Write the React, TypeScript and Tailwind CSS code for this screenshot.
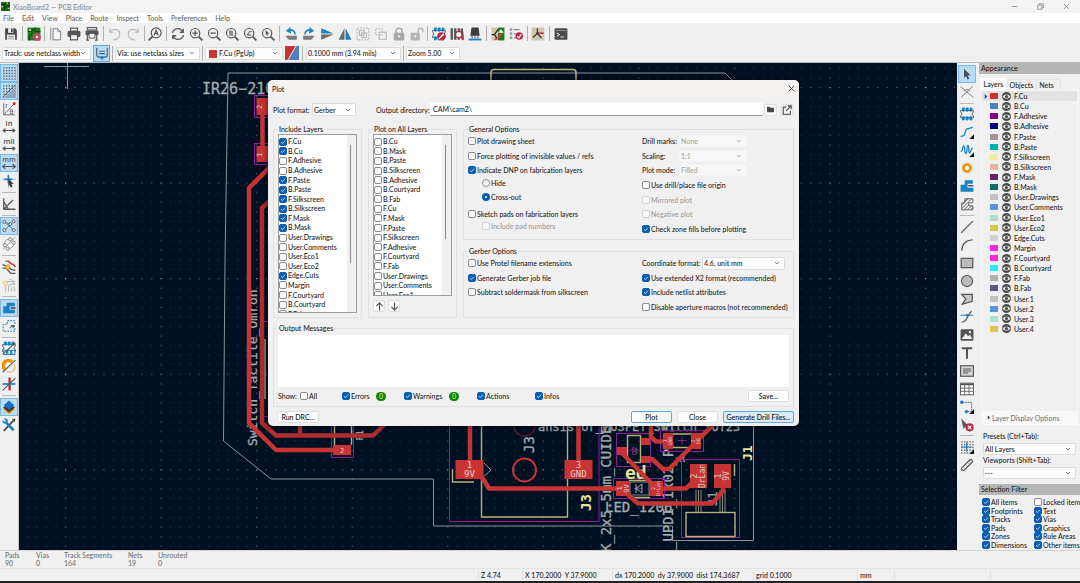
import React, { useState } from "react";

type Glyph = React.ReactNode;

const BLUE = "#1a81c4";
const INK = "#545454";
const RED = "#bf2641";

const grayLine = { stroke: INK, strokeWidth: 2, fill: "none" };
const blueLine = { stroke: BLUE, strokeWidth: 2.2, fill: "none" };
const paleLine = { stroke: "#b9b9b9", strokeWidth: 2, fill: "none" };

const magnifier = (
  <>
    <circle cx="10.5" cy="10.5" r="8" {...grayLine} />
    <path d="M16.5 16.5 L23 23" stroke={INK} strokeWidth="3" />
  </>
);

const dots = (n: number, color: string) =>
  Array.from({ length: n * n }, (_, i) => (
    <rect key={i} x={2 + (i % n) * (19 / (n - 1))} y={2 + Math.floor(i / n) * (19 / (n - 1))} width="2.4" height="2.4" fill={color} />
  ));

const chip = (
  <>
    <path d="M1 6 H23 V9 C20 9 20 15 23 15 V18 H1 V15 C4 15 4 9 1 9 Z" fill="#f4f4f4" stroke={INK} strokeWidth="1.5" />
    {[3, 9.5, 16].map((x) => (
      <g key={x} fill={BLUE}>
        <rect x={x} y="1" width="5.5" height="7" rx="2.5" />
        <rect x={x} y="16" width="5.5" height="7" rx="2.5" />
      </g>
    ))}
  </>
);

const corner = <path d="M24 16 V24 H16 Z" fill="#111" />;

const glyphs: Record<string, Glyph> = {
  Save: (
    <>
      <path d="M2 2 H19 L22 5 V22 H2 Z" fill="#484848" />
      <rect x="7" y="2" width="9" height="8" fill="#ededed" />
      <rect x="12" y="3" width="3" height="6" fill="#484848" />
      <rect x="5" y="13" width="14" height="9" fill="#ededed" />
      <path d="M7 16 H17 M7 19 H17" stroke="#777" strokeWidth="1.2" />
    </>
  ),
  "Board setup": (
    <>
      <rect x="1" y="1" width="22" height="22" fill="#1d7a1d" />
      <path d="M1 7 H8 L12 3 M4 23 V15 L9 11 M14 1 V8 H23" stroke="#0d4b10" strokeWidth="2" fill="none" />
      <circle cx="5" cy="5" r="2" fill="#d9c38a" />
      <circle cx="17" cy="17" r="4" fill="none" stroke="#d2486a" strokeWidth="3.5" />
      <circle cx="17" cy="17" r="6.5" fill="none" stroke="#d2486a" strokeWidth="2" strokeDasharray="3 2.5" />
      <circle cx="17" cy="17" r="2" fill="#fff" />
    </>
  ),
  "Page settings": (
    <>
      <path d="M7 3 H15 L20 8 V22 H7 Z" stroke="#777" strokeWidth="1.6" fill="#f7f7f7" />
      <path d="M15 3 V8 H20 M3 1 V23" stroke="#777" strokeWidth="1.4" fill="none" />
    </>
  ),
  Print: (
    <>
      <rect x="6" y="2" width="12" height="5" fill="none" stroke={INK} strokeWidth="2" />
      <rect x="1" y="7" width="22" height="10" rx="2" fill={INK} />
      <rect x="6" y="13" width="12" height="9" fill="#f0f0f0" stroke={INK} strokeWidth="2" />
    </>
  ),
  Plot: (
    <>
      <rect x="4" y="1" width="16" height="4" fill="none" stroke={INK} strokeWidth="1.8" />
      <rect x="1" y="6" width="22" height="8" rx="1" fill={INK} />
      <path d="M4 14 V23 M20 14 V23 M2 22.5 H7 M17 22.5 H22" stroke={INK} strokeWidth="2" />
      <rect x="7" y="11" width="10" height="8" fill="#f0f0f0" stroke={INK} strokeWidth="1.5" />
    </>
  ),
  Undo: <path d="M3 2 V9 H10 M3.5 8.5 C9 1 21 4 20 13 C19 19 14 22 9 22" {...paleLine} />,
  Redo: <path d="M21 2 V9 H14 M20.5 8.5 C15 1 3 4 4 13 C5 19 10 22 15 22" {...paleLine} />,
  Find: (
    <>
      <circle cx="14" cy="10" r="8.5" {...grayLine} />
      <path d="M8 16 L1 23" stroke={INK} strokeWidth="3" />
      <path d="M10.5 14 L14 5.5 L17.5 14 M11.8 11.3 H16.2" stroke={INK} strokeWidth="2" fill="none" />
    </>
  ),
  Refresh: (
    <path d="M21 3 V9 H15 M20.5 9 C17 0 5 1 2.5 10 M3 21 V15 H9 M3.5 15 C7 24 19 23 21.5 14" stroke={INK} strokeWidth="2.2" fill="none" />
  ),
  "Zoom in": (
    <>
      {magnifier}
      <path d="M6 10.5 H15 M10.5 6 V15" stroke={INK} strokeWidth="2.2" />
    </>
  ),
  "Zoom out": (
    <>
      {magnifier}
      <path d="M6 10.5 H15" stroke={INK} strokeWidth="2.2" />
    </>
  ),
  "Zoom to fit": (
    <>
      {magnifier}
      <path d="M7 6 H12 L14 8 V15 H7 Z" fill="#8a8a8a" />
    </>
  ),
  "Zoom to objects": (
    <>
      {magnifier}
      <path d="M6 12 H9 L11 8 H15 M7 14 H14" stroke="#777" strokeWidth="2" fill="none" />
    </>
  ),
  "Zoom to selection": (
    <>
      {magnifier}
      <path d="M8 5 L14 11 L11 11.5 L12 15 L10 15 L9.3 12 L8 13 Z" fill={INK} />
    </>
  ),
  "Rotate left": (
    <>
      <path d="M2 15 H22 V22 L2 15 Z M2 15 L22 22 H8 Z" fill="#7a7a7a" />
      <path d="M10 6 C15 4 19 7 19 13" {...blueLine} strokeWidth={2.6} />
      <path d="M11 0 L3 7 L12 11 Z" fill={BLUE} />
    </>
  ),
  "Rotate right": (
    <>
      <path d="M22 15 H2 V22 Z M22 15 L2 22 H16 Z" fill="#7a7a7a" />
      <path d="M14 6 C9 4 5 7 5 13" {...blueLine} strokeWidth={2.6} />
      <path d="M13 0 L21 7 L12 11 Z" fill={BLUE} />
    </>
  ),
  "Flip vertical": (
    <>
      <path d="M2 2 L23 11 H2 Z" fill={BLUE} />
      <path d="M2 22 L23 13 H2 Z" fill="#6a6a6a" />
    </>
  ),
  "Flip horizontal": (
    <>
      <path d="M11 2 L1 22 H11 Z" fill="#6a6a6a" />
      <path d="M13 2 L23 22 H13 Z" fill={BLUE} />
    </>
  ),
  Group: (
    <>
      <rect x="2" y="2" width="20" height="20" {...paleLine} strokeDasharray="3 2" />
      <rect x="6" y="6" width="8" height="8" {...paleLine} />
      <rect x="10" y="10" width="8" height="8" {...paleLine} />
    </>
  ),
  Ungroup: (
    <>
      <rect x="3" y="3" width="11" height="11" {...paleLine} strokeDasharray="3 2" />
      <rect x="9" y="9" width="12" height="12" {...paleLine} />
    </>
  ),
  Lock: (
    <>
      <rect x="3" y="10" width="18" height="13" rx="2" fill="#a9a9a9" />
      <path d="M7 11 V6 C7 1 17 1 17 6 V11" stroke="#a9a9a9" strokeWidth="2.6" fill="none" />
      <circle cx="12" cy="16" r="2" fill="#eee" />
    </>
  ),
  Unlock: (
    <>
      <rect x="1" y="10" width="16" height="13" rx="2" fill="#b5b5b5" />
      <path d="M14 11 V6 C14 1 22 1 22 6 V9" stroke="#b5b5b5" strokeWidth="2.4" fill="none" />
      <circle cx="9" cy="16" r="2" fill="#eee" />
    </>
  ),
  "Footprint editor": (
    <>
      {chip}
      <circle cx="16" cy="16" r="7" fill={RED} />
      <path d="M12 20 L20 12" stroke="#fff" strokeWidth="2.4" />
    </>
  ),
  "Footprint libraries": (
    <>
      <path d="M1 2 H5 V22 H1 Z M7 2 H11 V22 H7 Z M13 2 H17 V22 H13 Z M18 3 L22 2 L24 20 L20 21 Z" fill={INK} />
      <circle cx="15" cy="13" r="5.5" fill="#f3f3f3" stroke={RED} strokeWidth="2.2" />
      <path d="M19 17 L23 22" stroke={RED} strokeWidth="3" />
    </>
  ),
  "3D viewer": (
    <>
      <path d="M6 1 H18 L20 15 H4 Z" fill="#3d3d3d" />
      <path d="M7 15 V20 M12 15 V20 M17 15 V20" stroke="#666" strokeWidth="2" />
      <path d="M1 21.5 H23" stroke={BLUE} strokeWidth="3" />
    </>
  ),
  "Update PCB": (
    <>
      <rect x="1" y="1" width="11" height="22" fill="#d3c6a6" />
      <rect x="12" y="1" width="11" height="22" fill="#1f7a20" />
      <path d="M1 13 H6 L12 4 M6 13 L10 19" stroke="#333" strokeWidth="2.4" fill="none" />
      <path d="M6 21 C13 21 17 16 17 9" stroke="#e43a4d" strokeWidth="3" fill="none" />
      <path d="M12 10 L17 4 L22 10 Z" fill="#fff" />
    </>
  ),
  "Rules checker": (
    <>
      <path d="M2 3 H5 V6 H2 Z M2 10 H5 V13 H2 Z M2 17 H5 V20 H2 Z" fill="none" stroke="#777" strokeWidth="1.3" />
      <path d="M8 4.5 H18 M8 11.5 H13 M8 18.5 H12" stroke="#888" strokeWidth="1.8" />
      <circle cx="17.5" cy="15.5" r="6.5" fill={RED} />
      <path d="M14 15.5 L16.8 18.5 L21.3 12.7" stroke="#fff" strokeWidth="2" fill="none" />
    </>
  ),
  "Schematic editor": (
    <>
      <rect x="1" y="1" width="22" height="22" rx="2" fill="#d3c6ae" />
      <path d="M11 2 V11 L3 18 M11 11 L18 19" stroke="#444" strokeWidth="2.4" fill="none" />
      <path d="M11 10.5 H22" stroke="#d63347" strokeWidth="2.6" />
      <circle cx="11" cy="11" r="2.4" fill="#444" />
    </>
  ),
  Console: (
    <>
      <rect x="1" y="2" width="22" height="20" rx="2" fill="#4b4b4b" />
      <path d="M1 6 H23" stroke="#8c8c8c" strokeWidth="1.5" />
      <path d="M5 10 L9 13 L5 16 M11 17 H17" stroke="#e5e5e5" strokeWidth="1.8" fill="none" />
    </>
  ),
  "Show grid": dots(5, "#4d5f70"),
  "Grid overrides": (
    <>
      {dots(5, "#4d5f70")}
      <path d="M24 4 V24 H4 Z" fill="#8ea7bd" />
      <path d="M1 23 L23 1" stroke={INK} strokeWidth="1.5" />
    </>
  ),
  "Polar coordinates": (
    <>
      <path d="M3 2 V22 H22 M3 22 L20 4" stroke="#666" strokeWidth="1.6" fill="none" />
      <circle cx="21" cy="3" r="2.5" fill={RED} />
      <text x="6" y="11" fontSize="11" fontFamily="Liberation Sans" fill={INK}>r</text>
      <text x="13" y="20" fontSize="12" fontFamily="Liberation Sans" fill={INK}>θ</text>
    </>
  ),
  Inches: (
    <>
      <text x="12" y="11" textAnchor="middle" fontSize="13" fontFamily="Open Sans" fontWeight="600" fill={INK}>in</text>
      <path d="M3 18 H21 M6 15 L2 18 L6 21 M18 15 L22 18 L18 21" {...grayLine} />
    </>
  ),
  Mils: (
    <>
      <text x="12" y="11" textAnchor="middle" fontSize="13" fontFamily="Open Sans" fontWeight="600" fill={INK}>mil</text>
      <path d="M3 18 H21 M6 15 L2 18 L6 21 M18 15 L22 18 L18 21" {...grayLine} />
    </>
  ),
  Millimeters: (
    <>
      <text x="12" y="11" textAnchor="middle" fontSize="12" fontFamily="Open Sans" fontWeight="600" fill={INK}>mm</text>
      <path d="M2 18 H22 M6 14 L1 18 L6 22 M18 14 L23 18 L18 22" {...grayLine} />
    </>
  ),
  "Full crosshair": (
    <>
      <path d="M0 9 H24 M11 0 V24" stroke="#a9c6dc" strokeWidth="1.6" />
      <path d="M4 9 H18 M11 2 V16" stroke={BLUE} strokeWidth="3" />
      <path d="M11 8 L20 17 L16 17.5 L18 22 L15 23 L13 19 L11 21 Z" fill="#3c3c3c" />
    </>
  ),
  "Angle mode": <path d="M3 2 V21 H23 M3 21 L19 5 M3 8 L11 21" {...grayLine} strokeWidth={2.2} />,
  Ratsnest: (
    <>
      <path d="M5 6 L19 18 M5 19 L19 5 M5 6 L13 8" stroke="#5c7a93" strokeWidth="1.6" />
      {[[4, 5], [20, 4], [4, 19], [20, 19], [14, 9]].map(([x, y]) => (
        <circle key={`${x}-${y}`} cx={x} cy={y} r="2.6" fill="#d8ebf8" stroke={INK} strokeWidth="1.5" />
      ))}
    </>
  ),
  "Curved ratsnest": (
    <>
      <path d="M2 21 L22 1 M4 12 C5 5 9 4 12 4 M11 20 C16 20 20 16 21 11" stroke="#8b8b8b" strokeWidth="1.6" fill="none" />
      <circle cx="5" cy="14" r="2.8" fill="none" stroke="#8b8b8b" strokeWidth="1.6" />
      <circle cx="14" cy="4" r="2.8" fill="none" stroke="#8b8b8b" strokeWidth="1.6" />
      <circle cx="10" cy="20" r="2.8" fill="none" stroke="#8b8b8b" strokeWidth="1.6" />
      <circle cx="20" cy="10" r="2.8" fill="none" stroke="#8b8b8b" strokeWidth="1.6" />
    </>
  ),
  "Net highlight": (
    <>
      <path d="M1 14 L7 14 L15 23 H23" {...grayLine} strokeWidth={2.2} />
      <path d="M1 8 L9 11 L16 16 L23 18" {...grayLine} strokeWidth={2.2} />
      <path d="M6 2 H11 L16 7 H19 L23 12" stroke={RED} strokeWidth="2.4" fill="none" />
      <circle cx="10" cy="12" r="3.4" fill="#ffd27a" stroke="#f29100" strokeWidth="2" />
    </>
  ),
  "Net colors": (
    <>
      <path d="M9 6 H23 M11 23 V16 C11 12 14 10 23 10 M16 23 V16 M21 23 V14" stroke="#b5b5b5" strokeWidth="1.8" fill="none" />
      <path d="M12 2 C17 2 20 6 21 12" stroke="#a9c6dc" strokeWidth="1.8" fill="none" />
      <path d="M6 23 V12" stroke="#e9b1b9" strokeWidth="2" fill="none" />
      <circle cx="6" cy="9" r="3.4" fill="#fff1d6" stroke="#f0b45a" strokeWidth="1.6" />
    </>
  ),
  "Fill zones": (
    <>
      <path d="M8 3 H22 V9 H13 V15 H22 V21 H2 V9 H8 Z" fill={BLUE} />
      <path d="M15 12 H23" stroke={INK} strokeWidth="3" />
    </>
  ),
  "Outline zones": (
    <>
      <path d="M9 3 H22 V9 M13 15 H22 V21 H2 V9 H9 V3" {...blueLine} strokeWidth={1.8} strokeDasharray="3 2" />
      <path d="M15 12 H22" stroke={INK} strokeWidth="3" />
    </>
  ),
  "Sketch pads": (
    <>
      {chip}
      <path d="M3 16 H8 V23 H3 Z M10 16 H15 V23 H10 Z M17 16 H22 V23 H17 Z" fill="#fff" stroke={BLUE} strokeWidth="1.8" />
      <path d="M1 23 L23 3" stroke={INK} strokeWidth="1.8" />
    </>
  ),
  "Sketch vias": (
    <>
      <path d="M5 18 A8 8 0 0 1 17 5" stroke="#f29100" strokeWidth="6" fill="none" />
      <path d="M8 21 A9 9 0 0 0 21 9" stroke="#d8a65a" strokeWidth="1.6" fill="none" />
      <path d="M1 23 L23 2" stroke={INK} strokeWidth="1.8" />
    </>
  ),
  "Sketch tracks": (
    <>
      <path d="M13 1 V23" stroke={RED} strokeWidth="4" />
      <path d="M1 12 H23" stroke={BLUE} strokeWidth="3" />
      <path d="M1 23 L23 2" stroke={INK} strokeWidth="1.8" />
    </>
  ),
  "Layers manager": (
    <>
      <path d="M12 9 L22 16 L12 24 L2 16 Z" fill="#e08a00" />
      <path d="M12 5 L22 13 L12 21 L2 13 Z" fill="#46311a" />
      <path d="M12 1 L21 9 L12 17 L3 9 Z" fill="#1570c0" />
    </>
  ),
  Properties: (
    <>
      <path d="M3 22 L20 4" stroke="#4a4a4a" strokeWidth="3" />
      <path d="M17 2 L23 1 L22 7 Z" fill="#4a4a4a" />
      <path d="M7 8 L20 21" stroke={BLUE} strokeWidth="4.4" />
      <path d="M1 3 L5 7 L7 5 L3 1 C10 0 11 4 9 9 C4 11 0 9 1 3 Z" fill={BLUE} />
    </>
  ),
  Select: <path d="M7 3 L18 14 L13 14.5 L16 20 L13 21.5 L10.5 16 L7 19 Z" fill="#4d4d4d" />,
  "Local ratsnest": (
    <>
      <path d="M1 3 L23 21 M2 21 L22 2" stroke="#777" strokeWidth="1.6" />
      <path d="M7 11 A5.5 5.5 0 0 1 17 11" stroke="#777" strokeWidth="1.5" fill="none" />
    </>
  ),
  Footprint: chip,
  "Route tracks": (
    <>
      <path d="M1 20 L7 18 L11 7 L22 4" {...blueLine} />
      {corner}
    </>
  ),
  "Tune length": (
    <>
      <path d="M1 14 H3 C5 14 4 5 6.5 5 C9 5 7 18 10 18 C13 18 11 4 13.5 4 C16 4 14 17 16.5 17 C19 17 18 9 22 9" {...blueLine} />
      {corner}
    </>
  ),
  Via: <circle cx="12" cy="12" r="6" fill="#fff" stroke="#f29100" strokeWidth="4.5" />,
  Zone: (
    <>
      <path d="M8 2 H22 V8 H13 V15 H23 V22 H1 V10 H8 Z" fill={BLUE} />
      <path d="M14 11.5 H23" stroke={INK} strokeWidth="2.6" />
    </>
  ),
  "Rule area": (
    <path d="M8 3 H22 V10 H15 V15 H22 V22 H3 V10 H8 Z M8 8 L13 3 M3 14 L14 3 M3 20 L20 3 M7 22 L15 14 M13 22 L20 15 M18 22 L22 18" stroke="#666" strokeWidth="1.7" fill="none" />
  ),
  Line: <path d="M2 22 L22 2" {...grayLine} />,
  Arc: <path d="M3 22 C3 10 10 4 22 3" {...grayLine} />,
  Rectangle: <rect x="2" y="4" width="20" height="16" fill="#bcbcbc" stroke={INK} strokeWidth="2" />,
  Circle: <circle cx="12" cy="12" r="9.5" fill="#bcbcbc" stroke={INK} strokeWidth="2" />,
  Polygon: <path d="M3 4 H21 V16 L4 21 L10 12 Z" fill="#c9c9c9" stroke={INK} strokeWidth="2.2" />,
  Bezier: (
    <>
      <path d="M1 9 H22" stroke={BLUE} strokeWidth="1.8" />
      <path d="M3 21 C14 20 11 9 20 2" {...grayLine} />
      <rect x="10" y="7" width="4" height="4" fill={BLUE} />
    </>
  ),
  Image: (
    <>
      <rect x="1" y="2" width="22" height="20" rx="2" fill={INK} />
      <path d="M3 19 L10 9 L14 14 L17 11 L21 19 Z" fill="#f2f2f2" />
      <circle cx="17" cy="7" r="2" fill="#f2f2f2" />
    </>
  ),
  Text: <path d="M3 4 H21 M12 4 V22" stroke={INK} strokeWidth="3.4" />,
  "Text box": (
    <>
      <rect x="1" y="3" width="22" height="18" fill="#d6d6d6" stroke={INK} strokeWidth="2" />
      <path d="M5 8.5 H19 M5 12 H19 M5 15.5 H14" stroke={INK} strokeWidth="1.8" />
    </>
  ),
  Table: (
    <>
      <rect x="1" y="2" width="22" height="20" fill="#fff" stroke={INK} strokeWidth="1.6" />
      <path d="M1 4 H23" stroke={INK} strokeWidth="3" />
      <path d="M1 10.5 H23 M1 16 H23 M8 4 V22 M15.5 4 V22" stroke={INK} strokeWidth="1.4" />
    </>
  ),
  Dimension: (
    <>
      <path d="M4 4 H20 V20 H12" stroke={INK} strokeWidth="1.6" fill="none" strokeDasharray="3 1.5" />
      <circle cx="3" cy="4" r="3" fill={BLUE} />
      <circle cx="11" cy="20" r="3" fill={BLUE} />
      {corner}
    </>
  ),
  "Delete tool": (
    <>
      <path d="M2 1 L15 14 L9 14.5 L6 19 Z" fill={INK} />
      <circle cx="16.5" cy="16" r="7" fill={RED} />
      <path d="M13.5 13 L19.5 19 M19.5 13 L13.5 19" stroke="#fff" strokeWidth="2" />
    </>
  ),
  "Grid origin": (
    <>
      {dots(5, "#666")}
      <path d="M2 12 H20 M11.5 4 V20" stroke={BLUE} strokeWidth="2" />
      {corner}
    </>
  ),
  Measure: (
    <>
      <path d="M3 17 L17 3 C19 1 23 5 21 7 L7 21 C5 23 1 19 3 17 Z" fill="#ececec" stroke={INK} strokeWidth="2" />
      <path d="M8 17 L10 19 M11 13 L13 15 M15 9 L17 11" stroke={INK} strokeWidth="1.4" />
    </>
  ),
};

const topTools = [
  ["Save"],
  ["Board setup"],
  ["Page settings", "Print", "Plot"],
  ["Undo", "Redo"],
  ["Find"],
  ["Refresh", "Zoom in", "Zoom out", "Zoom to fit", "Zoom to objects", "Zoom to selection"],
  ["Rotate left", "Rotate right", "Flip vertical", "Flip horizontal", "Group", "Ungroup", "Lock", "Unlock"],
  ["Footprint editor", "Footprint libraries", "3D viewer"],
  ["Update PCB", "Rules checker"],
  ["Schematic editor"],
  ["Console"],
];

const leftTools = [
  ["Show grid", "Grid overrides", "Polar coordinates", "Inches", "Mils", "Millimeters", "Full crosshair"],
  ["Angle mode"],
  ["Ratsnest", "Curved ratsnest"],
  ["Net highlight", "Net colors"],
  ["Fill zones", "Outline zones"],
  ["Sketch pads", "Sketch vias", "Sketch tracks"],
  ["Layers manager", "Properties"],
];

const rightTools = [
  ["Select", "Local ratsnest"],
  ["Footprint", "Route tracks", "Tune length", "Via", "Zone", "Rule area"],
  ["Line", "Arc", "Rectangle", "Circle", "Polygon", "Bezier", "Image", "Text", "Text box", "Table", "Dimension", "Delete tool"],
  ["Grid origin", "Measure"],
];

const activeTools = ["Show grid", "Grid overrides", "Millimeters", "Ratsnest", "Fill zones", "Layers manager", "Select"];

function ToolButton({ name }: { name: string }) {
  const active = activeTools.includes(name);
  return (
    <button
      type="button"
      aria-label={name}
      className={
        active
          ? "flex size-[18px] shrink-0 items-center justify-center border border-[#7ab8e8] bg-[#b9dcf5]"
          : "flex size-[18px] shrink-0 items-center justify-center"
      }
    >
      <svg viewBox="0 0 24 24" className="size-[14px] shrink-0" aria-hidden="true">
        {glyphs[name]}
      </svg>
    </button>
  );
}

function ToolStrip({ groups, vertical }: { groups: string[][]; vertical?: boolean }) {
  return (
    <>
      {groups.map((group, i) => (
        <React.Fragment key={i}>
          {i > 0 && (
            <div className="flex flex-1 items-center justify-center">
              <div className={vertical ? "h-px w-[14px] bg-[#b8b8b8]" : "h-[15px] w-px bg-[#b0b0b0]"} />
            </div>
          )}
          {group.map((name) => (
            <ToolButton key={name} name={name} />
          ))}
        </React.Fragment>
      ))}
    </>
  );
}

function Chevron() {
  return (
    <svg viewBox="0 0 10 6" className="pointer-events-none absolute right-[4px] top-1/2 h-[3px] w-[6px] -translate-y-1/2" aria-hidden="true">
      <path d="M1 1 L5 5 L9 1" fill="none" stroke="currentColor" strokeWidth="1.4" />
    </svg>
  );
}

function Picker({
  label,
  value,
  className,
  selectClass = "pl-px",
  disabled,
  children,
}: {
  label: string;
  value: string;
  className: string;
  selectClass?: string;
  disabled?: boolean;
  children?: React.ReactNode;
}) {
  return (
    <div className={`relative shrink-0 rounded-[1px] border ${disabled ? "border-[#f4f4f4] bg-[#f8f8f8] text-[#a0a0a0]" : "border-[#dcdcdc] bg-[#fdfdfd] text-[#555]"} ${className}`}>
      {children}
      <select aria-label={label} disabled={disabled} className={`block size-full appearance-none truncate bg-transparent outline-none ${disabled ? "text-[#a0a0a0]" : "text-[#222]"} ${selectClass}`}>
        <option>{value}</option>
      </select>
      <Chevron />
    </div>
  );
}

function Check({ label, checked, disabled, className = "" }: { label: string; checked?: boolean; disabled?: boolean; className?: string }) {
  const [on, setOn] = useState(!!checked);
  return (
    <label className={`flex items-center gap-px whitespace-nowrap ${disabled ? "text-[#9c9c9c]" : ""} ${className}`}>
      <span className="relative flex size-[8px] shrink-0">
        <input
          type="checkbox"
          checked={on}
          disabled={disabled}
          onChange={(e) => setOn(e.target.checked)}
          className="size-[8px] appearance-none rounded-[2px] border border-[#8a8a8a] bg-[#fafafa] checked:border-[#0a5fb5] checked:bg-[#0a5fb5] disabled:border-[#cfcfcf]"
        />
        {on && (
          <svg viewBox="0 0 8 8" className="pointer-events-none absolute inset-0 size-[8px]" aria-hidden="true">
            <path d="M2 4.2 L3.4 5.5 L6 2.8" fill="none" stroke="#fff" strokeWidth="0.7" />
          </svg>
        )}
      </span>
      {label}
    </label>
  );
}

function Radio({ label, checked }: { label: string; checked?: boolean }) {
  return (
    <label className="flex items-center gap-px self-start pl-[14px]">
      <input
        type="radio"
        name="dnp"
        defaultChecked={checked}
        className="size-[8px] appearance-none rounded-full border border-[#8a8a8a] bg-[#fafafa] checked:border-[3px] checked:border-[#0a5fb5]"
      />
      {label}
    </label>
  );
}

function Group({ title, className = "", children }: { title: string; className?: string; children: React.ReactNode }) {
  return (
    <fieldset className={`min-w-0 border border-[#e0e0e0] pl-[4px] pr-[4px] ${className}`}>
      <legend className="h-[10px] px-px">{title}</legend>
      {children}
    </fieldset>
  );
}

const layers: [string, string][] = [
  ["F.Cu", "#c83434"],
  ["B.Cu", "#4d7fc4"],
  ["F.Adhesive", "#840084"],
  ["B.Adhesive", "#000084"],
  ["F.Paste", "#a39593"],
  ["B.Paste", "#00b0ac"],
  ["F.Silkscreen", "#f2eda1"],
  ["B.Silkscreen", "#e8b2a7"],
  ["F.Mask", "#5c2a6a"],
  ["B.Mask", "#0f6e62"],
  ["User.Drawings", "#c2c2c2"],
  ["User.Comments", "#5994dc"],
  ["User.Eco1", "#b4dbd2"],
  ["User.Eco2", "#d8c852"],
  ["Edge.Cuts", "#d0d2cd"],
  ["Margin", "#ff26e2"],
  ["F.Courtyard", "#ff26e2"],
  ["B.Courtyard", "#26e9ff"],
  ["F.Fab", "#afafaf"],
  ["B.Fab", "#585d84"],
  ["User.1", "#c2c2c2"],
  ["User.2", "#5994dc"],
  ["User.3", "#b4dbd2"],
  ["User.4", "#d8c852"],
];

const includeLayers: [string, boolean][] = [
  ["F.Cu", true],
  ["B.Cu", true],
  ["F.Adhesive", false],
  ["B.Adhesive", false],
  ["F.Paste", true],
  ["B.Paste", true],
  ["F.Silkscreen", true],
  ["B.Silkscreen", true],
  ["F.Mask", true],
  ["B.Mask", true],
  ["User.Drawings", false],
  ["User.Comments", false],
  ["User.Eco1", false],
  ["User.Eco2", false],
  ["Edge.Cuts", true],
  ["Margin", false],
  ["F.Courtyard", false],
  ["B.Courtyard", false],
  ["F.Fab", false],
];

const allLayers = [
  "B.Cu", "B.Mask", "B.Paste", "B.Silkscreen", "B.Adhesive", "B.Courtyard", "B.Fab", "F.Cu", "F.Mask",
  "F.Paste", "F.Silkscreen", "F.Adhesive", "F.Courtyard", "F.Fab", "User.Drawings", "User.Comments", "User.Eco1",
];

function Pad({ x, y, w, h, lines, vertical, size = 8 }: { x: number; y: number; w: number; h: number; lines?: string[]; vertical?: boolean; size?: number }) {
  const cx = x + w / 2;
  const cy = y + h / 2;
  return (
    <g>
      <rect x={x} y={y} width={w} height={h} fill="#c83434" />
      <g transform={vertical ? `rotate(-90 ${cx} ${cy})` : undefined} fill="#e6c9cc" fontSize={size} textAnchor="middle">
        {lines?.map((t, i) => (
          <text key={i} x={cx} y={cy + (i - (lines.length - 1) / 2) * size + size * 0.36}>
            {t}
          </text>
        ))}
      </g>
    </g>
  );
}

function Board() {
  const p = 9.555;
  return (
    <svg viewBox="19 63 938 487" preserveAspectRatio="xMinYMin slice" className="absolute inset-0 size-full" fontFamily="'DejaVu Sans Mono', 'DejaVu Sans', monospace" role="img" aria-label="Circuit board">
      <defs>
        <pattern id="grid" x="65" y="87" width={p * 10} height={p * 10} patternUnits="userSpaceOnUse">
          {Array.from({ length: 100 }, (_, i) => {
            const c = i % 10;
            const r = Math.floor(i / 10);
            const tone = c === 0 && r === 0 ? "#a3acb0" : c === 0 || r === 0 ? "#515f6a" : "#26343f";
            return <rect key={i} x={c * p} y={r * p} width="1.2" height="1.2" fill={tone} />;
          })}
        </pattern>
      </defs>
      <rect x="19" y="63" width="938" height="487" fill="#001023" />
      <rect x="19" y="63" width="938" height="487" fill="url(#grid)" />
      <path d="M67.5 63 V89 M44 66.5 H89" stroke="#8b959c" fill="none" />
      <g fill="none" stroke="#8a9397">
        <path d="M733 81 L725 73 H228 L225 260 L223.5 441 L271 479 H433.5 V526 H672.5 V540.5 H753.5 V420" />
        <path d="M484 463 L491 470 L484 476" />
      </g>
      <rect x="491" y="69.5" width="85" height="30" rx="3" fill="none" stroke="#b5b27c" strokeWidth="1.6" />
      <g fill="#a3abae" stroke="#a3abae" strokeWidth="0.3">
        <text x="202" y="94" fontSize="15">IR26−210</text>
        <text transform="translate(257 446) rotate(-90)" fontSize="13">Switch_Tactile_Omron</text>
        <text transform="translate(611 552) rotate(-90)" fontSize="14">K_2x5.5mm_CUIDE</text>
        <text transform="translate(673 550) rotate(-90)" fontSize="14">_UPDI_1x02_P2.5</text>
        <text x="538" y="431" fontSize="12">ansistor_MOSFET_Switch_SOT23</text>
        <text x="605" y="512" fontSize="14">LED_1206</text>
        <text transform="translate(534 453) rotate(-90)" fontSize="14">J3</text>
        <text transform="translate(363 440) rotate(-90)" fontSize="8">R1</text>
        <text x="680" y="462" fontSize="8">R</text>
        <text transform="translate(717 506) rotate(-90)" fontSize="12">J1</text>
      </g>
      <g fill="none" stroke="#8d1c97">
        <rect x="254.5" y="95.5" width="20" height="22" />
        <rect x="254.5" y="143.5" width="20" height="21" />
        <rect x="331.5" y="415" width="22" height="42.5" />
        <path d="M260 321.5 H268 M260 416.5 H268" />
        <path d="M449.5 420 V521.5 H599 V420" />
        <rect x="616.5" y="433.5" width="34" height="33" />
        <rect x="660.5" y="430.5" width="43" height="21" />
        <rect x="613.5" y="478.5" width="51" height="20" />
        <rect x="681.5" y="459.5" width="58" height="78" />
        <path d="M678 440.5 H686 M682 436.5 V444.5" />
        <path d="M634 488.5 H642 M630 450 H638" />
      </g>
      <g fill="none" stroke="#b5b27c" strokeWidth="1.4">
        <path d="M481.5 420 V517 H567.5 V420" />
        <path d="M452.5 469 V482 H474" />
        <path d="M265 339 V399 M334.5 425 V445 M351.5 425 V445" />
        <rect x="627.5" y="435.5" width="13" height="27" />
        <rect x="686" y="512.5" width="49" height="24" />
        <path d="M734.5 464 V476 M629 480.5 H650 M629 497.5 H650 M672 434 H692 M672 447.5 H692" />
      </g>
      <path d="M696 490 V512 M698.5 490 V512 M701 490 V512 M720 490 V512 M722.5 490 V512 M725 490 V512" stroke="#8f8f80" fill="none" />
      <rect x="630" y="482" width="19" height="13" fill="none" stroke="#7d868b" />
      <path d="M636 484 V493 M642 484 V493 L636 488.5 Z" stroke="#aab0b3" fill="none" />
      <g fill="#e6e39a" fontWeight="bold">
        <text transform="translate(591 511) rotate(-90)" fontSize="14">J3</text>
        <text transform="translate(752 461) rotate(-90)" fontSize="13">J1</text>
        <text x="625" y="479" fontSize="18">ed</text>
      </g>
      <g fill="none" stroke="#c83434" strokeWidth="4.5" strokeLinejoin="round" strokeLinecap="round">
        <path d="M262.5 108 V152" />
        <path d="M273 164 L249 188 V423 L276 450 H340" />
        <path d="M273 198 L262 208 V423 L276 435.5 H373 L385 424" stroke="#b02c2f" />
        <path d="M300 420 V435" stroke="#b02c2f" />
        <path d="M470 420 V465 M578.5 420 V465 M480 474 L489 488.5 H620" />
        <path d="M651 424 V437 L656 441.5 H667" />
        <path d="M714 424 L669 469 H663 L652 459 H646" />
        <path d="M622 453 L655 487" />
        <path d="M658 488.5 H686 L697 478" />
        <path d="M723 482 V491 L712 503.5 H638 L624 491" />
        <circle cx="524.5" cy="470" r="11.5" strokeWidth="2" />
        <path d="M514 427 C516 439 533 439 535 427" stroke="#5f1d2b" strokeWidth="1.5" />
      </g>
      <Pad x={256.5} y={98} w={20} h={17} />
      <Pad x={256.5} y={146} w={20} h={16} />
      <text transform="translate(262 107) rotate(-90)" textAnchor="middle" fontSize="7" fill="#e6c9cc">2</text>
      <text transform="translate(262 155) rotate(-90)" textAnchor="middle" fontSize="7" fill="#e6c9cc">1</text>
      <Pad x={333} y={445} w={18} h={10} lines={["2"]} size={7} />
      <Pad x={455.5} y={460} w={28} h={19} lines={["1", "9V"]} size={9} />
      <Pad x={564.5} y={460} w={28} h={19} lines={["3", "GND"]} size={9} />
      <Pad x={617} y={447} w={10} h={8} />
      <Pad x={641} y={438} w={9} h={7} />
      <Pad x={641} y={456} w={9} h={7} />
      <Pad x={663} y={433} w={10} h={16} lines={["1", "GND"]} vertical size={5} />
      <Pad x={691} y={433} w={10} h={16} lines={["2", "D8"]} vertical size={5} />
      <Pad x={616} y={481} w={14} h={15} lines={["1", "9V"]} vertical size={7} />
      <Pad x={649} y={481} w={14} h={15} lines={["2", "DrLan"]} vertical size={5} />
      <Pad x={690} y={464} w={17} h={24} lines={["2", "DrLan"]} vertical size={8} />
      <Pad x={714} y={464} w={17} h={24} lines={["1", "9V"]} vertical size={8} />
      <text transform="translate(637 455) rotate(-90)" fontSize="7" fill="#a0509f">Q2</text>
    </svg>
  );
}

const outlineButton = "h-[12px] rounded-[2px] border text-center leading-[9px] text-[#111]";

function PlotDialog() {
  return (
    <section role="dialog" aria-label="Plot" className="absolute left-[249px] top-[17px] flex w-[531px] flex-col rounded-[5px] bg-[#f0f0f0] shadow-[0_0_6px_rgba(0,0,0,0.6)]">
      <header className="flex h-[17px] items-center justify-between rounded-t-[5px] bg-[#f4f2f0] pl-[4px] pr-[4px]">
        <h1>Plot</h1>
        <button type="button" aria-label="Close dialog" className="flex size-[8px] items-center justify-center">
          <svg viewBox="0 0 8 8" className="size-[7px]" aria-hidden="true">
            <path d="M1 1 L7 7 M7 1 L1 7" stroke="#333" strokeWidth="1" />
          </svg>
        </button>
      </header>

      <div className="flex items-center pl-[5px] pr-[6px] pt-[6px]">
        <span className="w-[39px] whitespace-nowrap">Plot format:</span>
        <Picker label="Plot format" value="Gerber" className="h-[13px] w-[44px]" />
        <label htmlFor="outdir" className="ml-[20px] w-[54px] whitespace-nowrap">
          Output directory:
        </label>
        <input id="outdir" defaultValue="CAM\cam2\" className="h-[13px] min-w-0 flex-1 border-b border-[#9a9a9a] bg-white px-[3px] outline-none" />
        <button type="button" aria-label="Browse" className="ml-px flex h-[12px] w-[13px] items-center justify-center rounded-[2px] border border-[#e0e0e0] bg-[#fbfbfb]">
          <svg viewBox="0 0 12 10" className="h-[7px] w-[9px]" aria-hidden="true">
            <path d="M1 1 H5 L6 2.5 H11 V9 H1 Z" fill="#484848" />
          </svg>
        </button>
        <button type="button" aria-label="Open output directory" className="ml-[4px] flex h-[12px] w-[12px] items-center justify-center rounded-[2px] border border-[#e0e0e0] bg-[#fbfbfb]">
          <svg viewBox="0 0 12 12" className="size-[10px]" aria-hidden="true">
            <path d="M5 2.5 H1.5 V11 H10 V7 M5 7 L10.5 1.5 M7 1 H11 V5" fill="none" stroke="#484848" strokeWidth="1.3" />
          </svg>
        </button>
      </div>

      <div className="flex gap-[6px] px-[5px] pt-[8px]">
        <Group title="Include Layers" className="w-[89px] shrink-0 pb-[4px]">
          <div className="flex h-[179px] overflow-hidden border border-[#9d9d9d] bg-white leading-[9px]">
            <div className="mt-[2px] grid h-[182px] flex-1">
              {includeLayers.map(([name, on]) => (
                <Check key={name} label={name} checked={on} />
              ))}
            </div>
            <div className="w-[9px] bg-[#f0f0f0] pl-[3px] pt-[10px]">
              <div className="h-[118px] w-px bg-[#8a8a8a]" />
            </div>
          </div>
        </Group>

        <Group title="Plot on All Layers" className="w-[89px] shrink-0 pb-[4px]">
          <div className="flex h-[162px] overflow-hidden border border-[#9d9d9d] bg-white leading-[9px]">
            <div className="mt-[2px] grid h-[163px] flex-1">
              {allLayers.map((name) => (
                <Check key={name} label={name} />
              ))}
            </div>
            <div className="w-[9px] bg-[#f0f0f0] pl-[3px] pt-[10px]">
              <div className="h-[94px] w-px bg-[#8a8a8a]" />
            </div>
          </div>
          <div className="flex gap-[3px] pt-[4px]">
            {["Move up", "Move down"].map((name, i) => (
              <button key={name} type="button" aria-label={name} className="flex h-[12px] w-[12px] items-center justify-center rounded-[2px] border border-[#dcdcdc] bg-[#fcfcfc]">
                <svg viewBox="0 0 10 10" className="size-[9px]" aria-hidden="true">
                  <path d={i === 0 ? "M5 9.5 V1 M1.5 4.5 L5 1 L8.5 4.5" : "M5 0.5 V9 M1.5 5.5 L5 9 L8.5 5.5"} fill="none" stroke="#555" strokeWidth="1.3" />
                </svg>
              </button>
            ))}
          </div>
        </Group>

        <div className="flex min-w-0 flex-1 flex-col justify-between">
          <Group title="General Options" className="pb-[3px]">
            <div className="grid grid-cols-[174px_1fr]">
              <div className="grid h-[102px] grid-rows-7 items-center">
                <Check label="Plot drawing sheet" />
                <Check label="Force plotting of invisible values / refs" />
                <Check label="Indicate DNP on fabrication layers" checked />
                <Radio label="Hide" />
                <Radio label="Cross-out" checked />
                <Check label="Sketch pads on fabrication layers" />
                <Check label="Include pad numbers" disabled className="self-start pl-[14px]" />
              </div>
              <div className="grid h-[102px] grid-rows-7 items-center">
                {[
                  ["Drill marks:", "None"],
                  ["Scaling:", "1:1"],
                  ["Plot mode:", "Filled"],
                ].map(([label, value]) => (
                  <div key={label} className="flex items-center">
                    <span className="w-[37px] whitespace-nowrap">{label}</span>
                    <Picker label={label} value={value} disabled className="h-[12px] w-[68px]" />
                  </div>
                ))}
                <Check label="Use drill/place file origin" />
                <Check label="Mirrored plot" disabled />
                <Check label="Negative plot" disabled />
                <Check label="Check zone fills before plotting" checked />
              </div>
            </div>
          </Group>
          <Group title="Gerber Options" className="pb-[3px]">
            <div className="grid grid-cols-[174px_1fr]">
              <div className="grid h-[58px] grid-rows-4 items-center">
                <Check label="Use Protel filename extensions" />
                <Check label="Generate Gerber job file" checked />
                <Check label="Subtract soldermask from silkscreen" />
              </div>
              <div className="grid h-[58px] grid-rows-4 items-center">
                <div className="flex items-center">
                  <span className="w-[60px] whitespace-nowrap">Coordinate format:</span>
                  <Picker label="Coordinate format" value="4.6, unit mm" className="h-[13px] w-[83px]" />
                </div>
                <Check label="Use extended X2 format (recommended)" checked />
                <Check label="Include netlist attributes" checked />
                <Check label="Disable aperture macros (not recommended)" />
              </div>
            </div>
          </Group>
        </div>
      </div>

      <div className="px-[5px] pt-[5px]">
        <Group title="Output Messages" className="pb-[4px]">
          <textarea aria-label="Output messages" className="mt-[2px] block h-[52px] w-full resize-none bg-white outline-none" />
          <div className="mt-[3px] grid h-[12px] grid-cols-[22px_42px_62px_73px_58px_1fr_41px] items-center">
            <span>Show:</span>
            <Check label="All" />
            <div className="flex items-center justify-between pr-[18px]">
              <Check label="Errors" checked />
              <span className="flex h-[9px] w-[10px] items-center justify-center rounded-full bg-[#0b850b] text-[#d8e86a]">0</span>
            </div>
            <div className="flex items-center justify-between pr-[18px]">
              <Check label="Warnings" checked />
              <span className="flex h-[9px] w-[10px] items-center justify-center rounded-full bg-[#0b850b] text-[#d8e86a]">0</span>
            </div>
            <Check label="Actions" checked />
            <Check label="Infos" checked />
            <button type="button" className={`${outlineButton} border-[#dedede] bg-[#fdfdfd]`}>Save...</button>
          </div>
        </Group>
      </div>

      <footer className="flex gap-[5px] px-[5px] pb-[3px] pt-[4px]">
        <button type="button" className={`${outlineButton} ml-[4px] mr-auto w-[42px] border-[#dedede] bg-[#fdfdfd]`}>Run DRC...</button>
        <button type="button" className={`${outlineButton} w-[41px] border-[#5ea6dc] bg-[#fdfdfd]`}>Plot</button>
        <button type="button" className={`${outlineButton} w-[41px] border-[#dedede] bg-[#fdfdfd]`}>Close</button>
        <button type="button" className={`${outlineButton} w-[71px] border-[#5ea6dc] bg-[#dcebf8]`}>Generate Drill Files...</button>
      </footer>
    </section>
  );
}

function Appearance() {
  return (
    <aside className="flex w-[101px] shrink-0 flex-col overflow-hidden">
      <h2 className="h-[11px] bg-[#b6b6b6] pl-[2px]">Appearance</h2>
      <div role="tablist" className="mt-[4px] flex h-[12px] items-end pl-px">
        <button role="tab" aria-selected="true" className="h-[12px] w-[27px] bg-[#fbfbfb]">Layers</button>
        <button role="tab" aria-selected="false" className="h-[11px] w-[29px] border border-b-0 border-[#e4e4e4]">Objects</button>
        <button role="tab" aria-selected="false" className="h-[11px] w-[25px] border border-b-0 border-[#e4e4e4] pr-[4px]">Nets</button>
      </div>
      <div className="mx-[2px] flex flex-1 flex-col border border-[#f8f8f8]">
        <ul className="grid h-[243px]">
          {layers.map(([name, color], i) => (
            <li key={name} className={i === 0 ? "flex items-center bg-[#e2e2e2] pl-[2px]" : "flex items-center pl-[2px]"}>
              <svg viewBox="0 0 4 6" className="h-[5px] w-[4px]" aria-hidden="true">
                {i === 0 && <path d="M0.5 0 L3.5 3 L0.5 6 Z" fill="#2a2ad0" />}
              </svg>
              <svg viewBox="0 0 8 6" className="ml-[2px] h-[6px] w-[8px]" aria-hidden="true">
                <rect width="8" height="6" fill={color} />
              </svg>
              <svg viewBox="0 0 18 18" className="ml-[4px] size-[9px]" aria-hidden="true">
                <circle cx="9" cy="9" r="9" fill="#4c4c4c" />
                <path d="M1 9 C5 3.5 13 3.5 17 9 C13 14.5 5 14.5 1 9 Z" fill="#e8e8e8" />
                <circle cx="9" cy="9" r="3.2" fill="#4c4c4c" />
              </svg>
              <span className="pl-[3px]">{name}</span>
            </li>
          ))}
        </ul>
        <button type="button" className="mt-auto flex h-[13px] items-center gap-px bg-[#f8f8f8] pl-[5px] text-left text-[#777]">
          <svg viewBox="0 0 4 6" className="h-[5px] w-[4px]" aria-hidden="true">
            <path d="M0.5 0.5 L3 3 L0.5 5.5 Z" fill="#222" />
          </svg>
          Layer Display Options
        </button>
      </div>
      <div className="px-[4px] pb-[5px] pt-[6px]">
        <div className="h-[12px]">Presets (Ctrl+Tab):</div>
        <Picker label="Presets" value="All Layers" className="h-[12px] w-[93px]" />
        <div className="h-[12px]">Viewports (Shift+Tab):</div>
        <Picker label="Viewports" value="---" className="h-[12px] w-[93px]" />
      </div>
      <h2 className="h-[11px] bg-[#b6b6b6] pl-[2px]">Selection Filter</h2>
      <div className="grid h-[55px] grid-cols-[52px_auto] pb-px pl-[3px] pt-[3px] leading-[8px]">
        <Check label="All items" checked />
        <Check label="Locked items" />
        <Check label="Footprints" checked />
        <Check label="Text" checked />
        <Check label="Tracks" checked />
        <Check label="Vias" checked />
        <Check label="Pads" checked />
        <Check label="Graphics" checked />
        <Check label="Zones" checked />
        <Check label="Rule Areas" checked />
        <Check label="Dimensions" checked />
        <Check label="Other items" checked />
      </div>
    </aside>
  );
}

export default function App() {
  return (
    <div className="flex min-h-screen flex-col overflow-hidden bg-[#f0f0f0] font-[Lato,'Noto_Sans',sans-serif] text-[7px] font-medium leading-[10px] text-[#1c1c1c]">
      <header className="flex h-[13px] items-center gap-[3px] bg-[#f3f3f3] px-px text-[#8a8a8a]">
        <svg viewBox="0 0 20 20" className="size-[9px]" aria-hidden="true">
          <rect width="20" height="20" fill="#14691b" />
          <path d="M2 6 H8 L12 2 M8 20 V12 L14 8 H20" stroke="#0a3a0d" strokeWidth="3" fill="none" />
          <path d="M0 10 H5 M15 14 H20 M14 0 V5" stroke="#d9b13a" strokeWidth="3" />
        </svg>
        <span>XiaoBoard2 — PCB Editor</span>
        <div className="ml-auto flex gap-[18px] pr-[9px]">
          {[
            ["Minimize", "M1 5 H9"],
            ["Restore", "M1 3 H7 V9 H1 Z M3 3 V1 H9 V7 H7"],
            ["Close", "M1.5 1.5 L8.5 8.5 M8.5 1.5 L1.5 8.5"],
          ].map(([name, d]) => (
            <button key={name} type="button" aria-label={name} className="flex size-[8px] items-center justify-center">
              <svg viewBox="0 0 10 10" className="size-[7px]" aria-hidden="true">
                <path d={d} fill="none" stroke="#8a8a8a" strokeWidth="1.2" />
              </svg>
            </button>
          ))}
        </div>
      </header>

      <nav className="flex h-[10px] items-center gap-[8px] bg-white pl-[3px] text-[#666]">
        {["File", "Edit", "View", "Place", "Route", "Inspect", "Tools", "Preferences", "Help"].map((m) => (
          <button key={m} type="button">{m}</button>
        ))}
      </nav>

      <div className="flex h-[21px] w-[570px] items-center pl-[2px]">
        <ToolStrip groups={topTools} />
      </div>

      <div className="flex h-[18px] items-center pl-[2px]">
        <Picker label="Track width" value="Track: use netclass width" className="h-[13px] w-[89px]" />
        <button type="button" aria-label="Use starting track width" className="ml-[2px] flex h-[17px] w-[17px] items-center justify-center border border-[#5ea6dc] bg-[#b9dcf5]">
          <svg viewBox="0 0 24 24" className="size-[14px]" aria-hidden="true">
            <path d="M3 3 V15 C3 18 4 19 7 19 H17 C20 19 21 18 21 15 V3 M7 9 H17 M7 13 H17" fill="none" stroke="#4d5f70" strokeWidth="2" />
            <circle cx="12" cy="20" r="3" fill={BLUE} />
          </svg>
        </button>
        <div className="mx-[2px] h-[15px] w-px bg-[#b0b0b0]" />
        <Picker label="Via size" value="Via: use netclass sizes" className="h-[13px] w-[85px]" />
        <div className="mx-[2px] h-[15px] w-px bg-[#b0b0b0]" />
        <Picker label="Active layer" value="F.Cu (PgUp)" className="h-[13px] w-[78px]" selectClass="pl-[13px]">
          <span className="absolute left-[3px] top-[2px] size-[8px] bg-[#c83434]" />
        </Picker>
        <svg viewBox="0 0 14 14" className="ml-[2px] size-[14px]" aria-hidden="true">
          <rect width="14" height="14" fill="#4d7fc4" />
          <path d="M0 0 H11 L3 14 H0 Z" fill="#c83434" />
          <path d="M11 0 L3 14" stroke="#eee" strokeWidth="1" />
        </svg>
        <div className="mx-[3px] h-[15px] w-px bg-[#b0b0b0]" />
        <Picker label="Grid" value="0.1000 mm (3.94 mils)" className="h-[13px] w-[95px]" />
        <div className="mx-[2px] h-[15px] w-px bg-[#b0b0b0]" />
        <Picker label="Zoom" value="Zoom 5.00" className="h-[13px] w-[54px]" />
      </div>

      <main className="flex flex-1 border-t border-[#bdbdbd]">
        <div className="w-[19px] shrink-0 border-r border-[#c8c8c8] pt-px">
          <div className="flex h-[370px] flex-col">
            <ToolStrip groups={leftTools} vertical />
          </div>
        </div>
        <div className="relative min-w-0 flex-1 overflow-hidden bg-[#001023]">
          <Board />
          <PlotDialog />
        </div>
        <div className="w-[22px] shrink-0 pl-px pt-[2px]">
          <div className="flex h-[409px] w-[18px] flex-col">
            <ToolStrip groups={rightTools} vertical />
          </div>
        </div>
        <Appearance />
      </main>

      <dl className="flex h-[18px] border-t border-[#d5d5d5] pl-[5px] text-[#707070]">
        {[
          ["Pads", "90", "w-[31px]"],
          ["Vias", "0", "w-[28px]"],
          ["Track Segments", "164", "w-[64px]"],
          ["Nets", "19", "w-[30px]"],
          ["Unrouted", "0", "w-[40px]"],
        ].map(([k, v, w]) => (
          <div key={k} className={`${w} whitespace-nowrap leading-[8px]`}>
            <dt>{k}</dt>
            <dd>{v}</dd>
          </div>
        ))}
      </dl>

      <footer className="flex h-[15px] items-center border-b-2 border-t border-b-[#222] border-t-[#e4e4e4] whitespace-pre">
        <div className="w-[478px] shrink" />
        <div className="w-[44px] border-l border-[#e0e0e0] pl-[2px]">Z 4.74</div>
        <div className="w-[90px] border-l border-[#e0e0e0] pl-[2px]">X 170.2000  Y 37.9000</div>
        <div className="w-[141px] border-l border-[#e0e0e0] pl-[2px]">dx 170.2000  dy 37.9000  dist 174.3687</div>
        <div className="w-[104px] border-l border-[#e0e0e0] pl-[2px]">grid 0.1000</div>
        <div className="w-[37px] border-l border-[#e0e0e0] pl-[2px]">mm</div>
        <div className="h-[10px] w-[97px] border-x border-[#e0e0e0]" />
      </footer>
    </div>
  );
}
